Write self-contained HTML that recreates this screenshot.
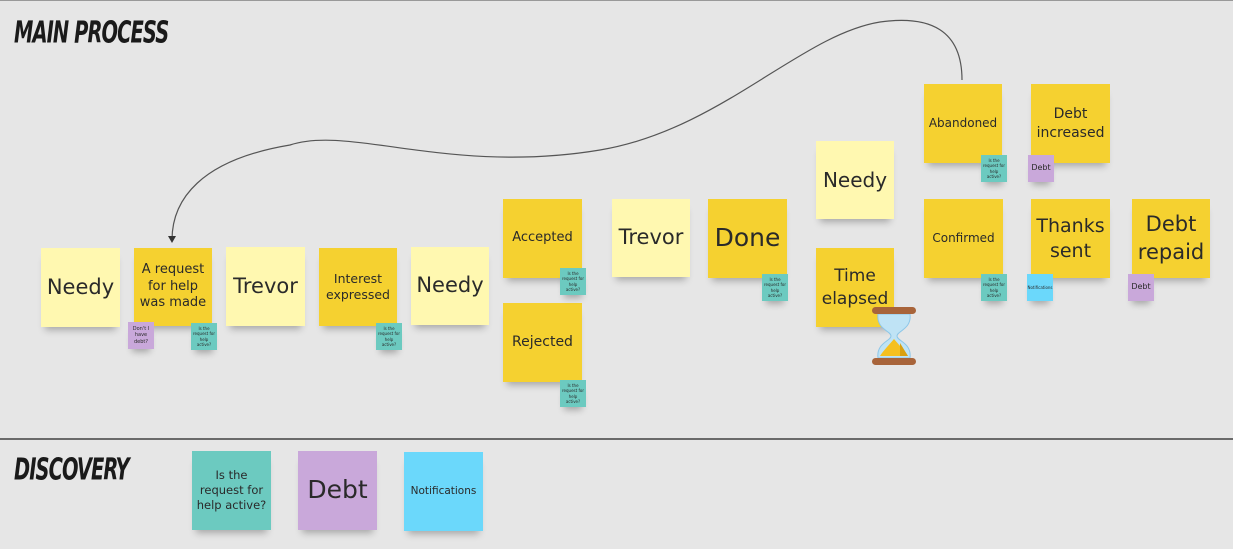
<!DOCTYPE html>
<html><head><meta charset="utf-8"><style>
body{margin:0;width:1233px;height:549px;background:#e6e6e6;position:relative;overflow:hidden;font-family:"DejaVu Sans","Liberation Sans",sans-serif;}
.s{position:absolute;display:flex;align-items:center;justify-content:center;text-align:center;color:#2a2a2a;box-shadow:0 7px 7px -4px rgba(0,0,0,.28);line-height:1.3;box-sizing:border-box;padding:3px 6px;}
.y{background:#f5d130}.l{background:#fff8b0}.t{background:#6ccac0}.p{background:#c9a8da}.b{background:#6bd8fb}
.m{width:26px;height:27px;font-size:4px;line-height:1.3;padding:1px}
.h{position:absolute;font-family:"DejaVu Sans Condensed","Liberation Sans",sans-serif;font-weight:bold;font-style:italic;color:#1a1a1a;letter-spacing:-1px;transform-origin:0 0;transform:scale(0.9,1.25)}
</style></head><body>
<div style="position:absolute;left:0;top:0;width:1233px;height:1px;background:#999"></div>
<div style="position:absolute;left:0;top:438px;width:1233px;height:2px;background:#6a6a6a"></div>
<div class="h" style="left:14px;top:15px;font-size:24px;">MAIN PROCESS</div>
<div class="h" style="left:14px;top:452px;font-size:24px;">DISCOVERY</div>
<svg style="position:absolute;left:0;top:0" width="1233" height="549">
<path d="M962,80 C962,30 930,15 880,22 C800,35 720,130 600,150 C450,175 350,125 290,145 C200,160 172,200 172,240" fill="none" stroke="#555" stroke-width="1.2"/>
<path d="M168,236 L176,236 L172,243 Z" fill="#333"/>
</svg>
<div class="s l" style="left:41px;top:248px;width:79px;height:79px;font-size:21px">Needy</div>
<div class="s y" style="left:134px;top:248px;width:78px;height:78px;font-size:13px;padding:3px 2px">A request for help was made</div>
<div class="s l" style="left:226px;top:247px;width:79px;height:79px;font-size:21px">Trevor</div>
<div class="s y" style="left:319px;top:248px;width:78px;height:78px;font-size:12.5px">Interest expressed</div>
<div class="s l" style="left:411px;top:247px;width:78px;height:78px;font-size:21px">Needy</div>
<div class="s y" style="left:503px;top:199px;width:79px;height:79px;font-size:13px">Accepted</div>
<div class="s y" style="left:503px;top:303px;width:79px;height:79px;font-size:14px">Rejected</div>
<div class="s l" style="left:612px;top:199px;width:78px;height:78px;font-size:21px">Trevor</div>
<div class="s y" style="left:708px;top:199px;width:79px;height:79px;font-size:25px">Done</div>
<div class="s l" style="left:816px;top:141px;width:78px;height:78px;font-size:20px">Needy</div>
<div class="s y" style="left:816px;top:248px;width:78px;height:79px;font-size:17px">Time elapsed</div>
<div class="s y" style="left:924px;top:84px;width:78px;height:79px;font-size:12px">Abandoned</div>
<div class="s y" style="left:1031px;top:84px;width:79px;height:79px;font-size:14px">Debt increased</div>
<div class="s y" style="left:924px;top:199px;width:79px;height:79px;font-size:12px">Confirmed</div>
<div class="s y" style="left:1031px;top:199px;width:79px;height:79px;font-size:19px">Thanks sent</div>
<div class="s y" style="left:1132px;top:199px;width:78px;height:79px;font-size:21px">Debt repaid</div>
<div class="s p m" style="left:128px;top:322px;font-size:5px">Don't I have debt?</div>
<div class="s t m" style="left:191px;top:323px">Is the request for help active?</div>
<div class="s t m" style="left:376px;top:323px">Is the request for help active?</div>
<div class="s t m" style="left:560px;top:268px">Is the request for help active?</div>
<div class="s t m" style="left:560px;top:380px">Is the request for help active?</div>
<div class="s t m" style="left:762px;top:274px">Is the request for help active?</div>
<div class="s t m" style="left:981px;top:155px">Is the request for help active?</div>
<div class="s p m" style="left:1028px;top:155px;font-size:8px">Debt</div>
<div class="s t m" style="left:981px;top:274px">Is the request for help active?</div>
<div class="s b m" style="left:1027px;top:274px;font-size:4px">Notifications</div>
<div class="s p m" style="left:1128px;top:274px;font-size:8px">Debt</div>
<div class="s t" style="left:192px;top:451px;width:79px;height:79px;font-size:11.5px;padding:3px 2px">Is the request for help active?</div>
<div class="s p" style="left:298px;top:451px;width:79px;height:79px;font-size:25px">Debt</div>
<div class="s b" style="left:404px;top:452px;width:79px;height:79px;font-size:10.5px">Notifications</div>
<svg style="position:absolute;left:871px;top:305px" width="46" height="62" viewBox="0 0 46 62">
<path d="M7,9 C5,24 20,26 20,31 C20,36 5,38 7,53 L39,53 C41,38 26,36 26,31 C26,26 41,24 39,9 Z" fill="#bfe3f5" stroke="#8cc6e8" stroke-width="1"/>
<path d="M9,51 C12,46 18,40 23,34 C28,40 34,46 37,51 Z" fill="#f5c020"/>
<path d="M29,38 L37,51 L29,51 Z" fill="#d9a010"/>
<rect x="1" y="2" width="44" height="7" rx="3.5" fill="#a8643a"/>
<rect x="1" y="53" width="44" height="7" rx="3.5" fill="#a8643a"/>
</svg>
</body></html>
